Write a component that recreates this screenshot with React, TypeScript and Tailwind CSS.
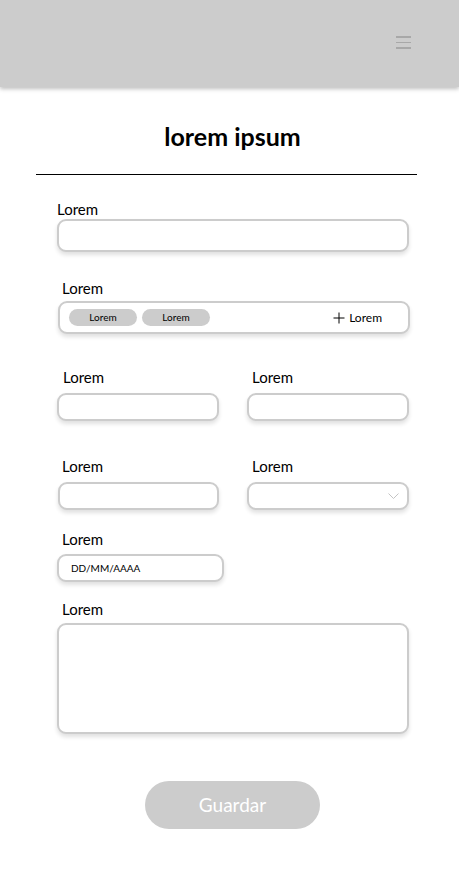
import React from "react";

const field =
  "border-2 border-[#cccccc] bg-white rounded-[9px] shadow-[0_3px_4px_rgba(0,0,0,0.12)]";

export default function App() {
  return (
    <div className="w-[459px] h-[875px] bg-white text-black font-['Lato','Noto_Sans',sans-serif] overflow-hidden">
      <header className="h-[87px] bg-[#cccccc] shadow-[0_2px_4px_rgba(0,0,0,0.25)] flex items-center justify-end pr-[48px]">
        <div className="flex flex-col gap-[4px] w-[15px] mt-[-2px]">
          <span className="h-[1.5px] bg-[#a8a8a8]" />
          <span className="h-[1.5px] bg-[#a8a8a8]" />
          <span className="h-[1.5px] bg-[#a8a8a8]" />
        </div>
      </header>

      <h1 className="mt-[34px] text-center text-[25px] font-bold leading-[30px] pl-[6px]">lorem ipsum</h1>
      <div className="mt-[23px] mx-[36px] w-[381px] h-[1px] bg-black" />

      <div className="pl-[57px] pr-[50px]">
        <div className="mt-[25px] text-[15px] leading-[18px]">Lorem</div>
        <div className={`${field} mt-[1px] h-[33px] w-[352px]`} />

        <div className="mt-[27px] ml-[5px] text-[15px] leading-[18px]">Lorem</div>
        <div className={`${field} mt-[4px] ml-[1px] h-[33px] w-[352px] flex items-center pl-[9px] pr-[26px]`}>
          <span className="w-[68px] h-[17px] rounded-full bg-[#cccccc] text-[10px] flex items-center justify-center">Lorem</span>
          <span className="ml-[5px] w-[68px] h-[17px] rounded-full bg-[#cccccc] text-[10px] flex items-center justify-center">Lorem</span>
          <span className="ml-auto text-[12px] flex items-center gap-[4px]">
            <svg width="12" height="12" viewBox="0 0 12 12" stroke="black" strokeWidth="1">
              <path d="M6 0.5v11M0.5 6h11" />
            </svg>
            Lorem
          </span>
        </div>

        <div className="mt-[34px] grid grid-cols-[162px_162px] gap-x-[28px]">
          <div className="ml-[6px] text-[15px] leading-[18px]">Lorem</div>
          <div className="ml-[5px] text-[15px] leading-[18px]">Lorem</div>
          <div className={`${field} mt-[7px] h-[28px]`} />
          <div className={`${field} mt-[7px] h-[28px]`} />
        </div>

        <div className="mt-[36px] grid grid-cols-[162px_162px] gap-x-[28px]">
          <div className="ml-[5px] text-[15px] leading-[18px]">Lorem</div>
          <div className="ml-[5px] text-[15px] leading-[18px]">Lorem</div>
          <div className={`${field} mt-[7px] h-[28px] ml-[1px]`} />
          <div className={`${field} mt-[7px] h-[28px] flex items-center justify-end pr-[8px]`}>
            <svg width="11" height="7" viewBox="0 0 11 7" fill="none" stroke="#c4c4c4" strokeWidth="1">
              <path d="M0.5 0.5 5.5 5.5 10.5 0.5" />
            </svg>
          </div>
        </div>

        <div className="mt-[20px] ml-[5px] text-[15px] leading-[18px]">Lorem</div>
        <div className={`${field} mt-[6px] h-[28px] w-[167px] flex items-center pl-[12px] text-[10px]`}>DD/MM/AAAA</div>

        <div className="mt-[18px] ml-[5px] text-[15px] leading-[18px]">Lorem</div>
        <div className={`${field} mt-[5px] h-[111px] w-[352px]`} />
      </div>

      <div className="mt-[47px] flex justify-center pl-[6px]">
        <button className="w-[175px] h-[48px] rounded-full bg-[#cccccc] text-white text-[19px]">Guardar</button>
      </div>
    </div>
  );
}
